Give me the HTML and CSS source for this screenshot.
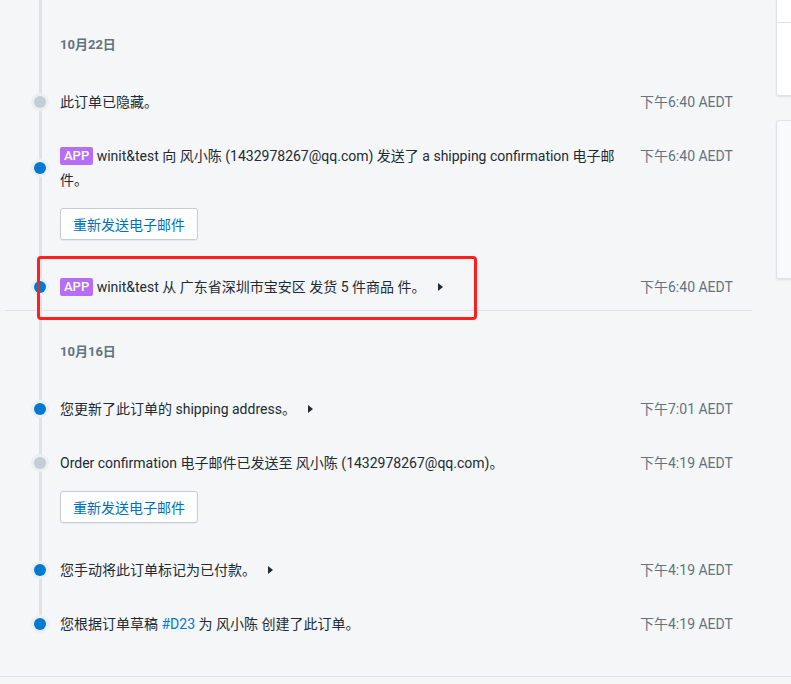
FILE: index.html
```html
<!DOCTYPE html>
<html lang="zh-CN">

<head>
    <meta charset="UTF-8">
    <title>订单时间线</title>
    <link rel="stylesheet" href="styles.css">
</head>

<body>

    <div class="page">
        <div class="layout">
            <div class="timeline">

                <div class="day day-first">
                    <h3 class="day-date">10月22日</h3>
                    <ul class="events">
                        <li class="event">
                            <div class="event-line">
                                <span class="dot dot-grey"></span>
                                <p class="event-text">此订单已隐藏。</p>
                                <span class="event-time">下午6:40 AEDT</span>
                            </div>
                        </li>
                        <li class="event">
                            <div class="event-line">
                                <span class="dot"></span>
                                <p class="event-text"><span class="badge">APP</span> winit&amp;test 向 风小陈 (1432978267@qq.com) 发送了 a shipping confirmation 电子邮件。</p>
                                <span class="event-time">下午6:40 AEDT</span>
                            </div>
                            <div class="event-actions">
                                <button class="btn">重新发送电子邮件</button>
                            </div>
                        </li>
                        <li class="event">
                            <div class="event-line">
                                <span class="dot"></span>
                                <p class="event-text"><span class="badge">APP</span> winit&amp;test 从 广东省深圳市宝安区 发货 5 件商品 件。<span class="caret"></span></p>
                                <span class="event-time">下午6:40 AEDT</span>
                            </div>
                            <div class="highlight"></div>
                        </li>
                    </ul>
                </div>

                <div class="day day-last">
                    <h3 class="day-date">10月16日</h3>
                    <ul class="events">
                        <li class="event">
                            <div class="event-line">
                                <span class="dot"></span>
                                <p class="event-text">您更新了此订单的 shipping address。<span class="caret"></span></p>
                                <span class="event-time">下午7:01 AEDT</span>
                            </div>
                        </li>
                        <li class="event">
                            <div class="event-line">
                                <span class="dot dot-grey"></span>
                                <p class="event-text">Order confirmation 电子邮件已发送至 风小陈 (1432978267@qq.com)。</p>
                                <span class="event-time">下午4:19 AEDT</span>
                            </div>
                            <div class="event-actions">
                                <button class="btn">重新发送电子邮件</button>
                            </div>
                        </li>
                        <li class="event">
                            <div class="event-line">
                                <span class="dot"></span>
                                <p class="event-text">您手动将此订单标记为已付款。<span class="caret"></span></p>
                                <span class="event-time">下午4:19 AEDT</span>
                            </div>
                        </li>
                        <li class="event">
                            <div class="event-line">
                                <span class="dot"></span>
                                <p class="event-text">您根据订单草稿 <a href="#" class="link">#D23</a> 为 风小陈 创建了此订单。</p>
                                <span class="event-time">下午4:19 AEDT</span>
                            </div>
                        </li>
                    </ul>
                </div>

            </div>

            <aside class="sidebar">
                <div class="card card-top">
                    <div class="card-section card-section-short"></div>
                    <div class="card-section"></div>
                </div>
                <div class="card card-muted"></div>
            </aside>
        </div>

        <div class="footer"></div>
    </div>

</body>

</html>
```

FILE: styles.css
```css
* {
    box-sizing: border-box;
}

body {
    margin: 0;
    padding: 0;
    background: #f4f6f8;
    font-family: Roboto, "Noto Sans CJK SC", sans-serif;
    color: #212b36;
    overflow: hidden;
}

.page {
    width: 791px;
    overflow: hidden;
}

.layout {
    display: flex;
    gap: 24px;
}

/* timeline */

.timeline {
    position: relative;
    width: 752px;
    flex-shrink: 0;
    padding-top: 4px;
    padding-left: 5px;
}

.timeline::before {
    content: "";
    position: absolute;
    left: 39px;
    top: 0;
    bottom: 52px;
    width: 3px;
    background: #dfe3e8;
}

.day {
    padding: 31px 20px 0 55px;
}

.day-first {
    border-bottom: 1px solid #dfe3e8;
}

.day-last {
    padding-bottom: 40px;
}

.day-date {
    margin: 0;
    font-size: 13px;
    line-height: 20px;
    font-weight: 700;
    color: #637381;
}

.events {
    list-style: none;
    margin: 20px 0 0;
    padding: 0;
}

.event {
    position: relative;
    padding: 15px 0;
}

.day-first .event:last-child {
    padding-bottom: 11px;
}

.day-last .event:last-child {
    padding-bottom: 0;
}

.event-line {
    position: relative;
    display: flex;
    gap: 20px;
    align-items: flex-start;
}

.dot {
    position: absolute;
    left: -26px;
    top: 50%;
    width: 12px;
    height: 12px;
    margin-top: -6px;
    border-radius: 50%;
    background: #007ace;
    box-shadow: 0 0 0 3px #eceff2;
}

.dot-grey {
    background: #c4cdd5;
}

.event-text {
    flex: 1;
    margin: 0;
    font-size: 14px;
    line-height: 24px;
}

.event-time {
    flex-shrink: 0;
    width: 92px;
    font-size: 14px;
    line-height: 24px;
    color: #637381;
    text-align: right;
    white-space: nowrap;
}

.badge {
    display: inline-block;
    padding: 0 4px;
    border-radius: 2px;
    background: #b56ef4;
    color: #fff;
    font-size: 13px;
    line-height: 18px;
    font-weight: 500;
    vertical-align: 1px;
}

.caret {
    display: inline-block;
    width: 0;
    height: 0;
    margin-left: 12px;
    border-top: 4px solid transparent;
    border-bottom: 4px solid transparent;
    border-left: 5px solid #212b36;
    vertical-align: 1px;
}

.link {
    color: #007ace;
    text-decoration: none;
}

.event-actions {
    margin: 16px 0 5px;
}

.btn {
    height: 32px;
    padding: 0 12px;
    background: #fff;
    border: 1px solid #c4cdd5;
    border-radius: 3px;
    box-shadow: 0 1px 0 rgba(22, 29, 37, 0.05);
    color: #006fbb;
    font-family: Roboto, "Noto Sans CJK SC", sans-serif;
    font-size: 14px;
    cursor: pointer;
}

/* annotation box */

.highlight {
    position: absolute;
    left: -23px;
    top: -4px;
    width: 440px;
    height: 64px;
    border: 3px solid #ff1f1f;
    border-radius: 4px;
}

/* right column */

.sidebar {
    width: 300px;
    flex-shrink: 0;
}

.card {
    background: #fff;
    border: 1px solid #dfe3e8;
    border-radius: 3px;
    box-shadow: 0 1px 2px rgba(63, 63, 68, 0.12);
}

.card-top {
    height: 96px;
    border-top: none;
    border-radius: 0 0 3px 3px;
}

.card-section-short {
    height: 23px;
    border-bottom: 1px solid #dfe3e8;
}

.card-muted {
    margin-top: 24px;
    height: 159px;
    background: #f9fafb;
}

.footer {
    height: 8px;
    border-top: 1px solid #dfe3e8;
}
```
